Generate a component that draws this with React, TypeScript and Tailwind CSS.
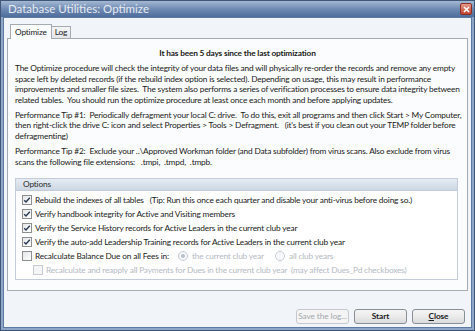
import React from 'react';

const font = { fontFamily: 'Lato, "Liberation Sans", sans-serif' };

function Check({ checked, disabled }: { checked?: boolean; disabled?: boolean }) {
  return (
    <span
      className={`inline-flex items-center justify-center w-[10px] h-[10px] border shrink-0 ${
        disabled ? 'border-[#c8ccd2] bg-[#f4f5f7]' : 'border-[#8e8f8f] bg-gradient-to-br from-[#e4e6e8] to-white'
      }`}
    >
      {checked && (
        <svg width="8" height="8" viewBox="0 0 8 8">
          <path d="M1.2 4.2 L3 6 L6.8 1.8" fill="none" stroke="#2a3a55" strokeWidth="1.4" />
        </svg>
      )}
    </span>
  );
}

function Radio({ checked }: { checked?: boolean }) {
  return (
    <span className="inline-flex items-center justify-center w-[10px] h-[10px] rounded-full border border-[#c8ccd2] bg-[#f6f7f9] shrink-0">
      {checked && <span className="w-[4px] h-[4px] rounded-full bg-[#b9c0ca]" />}
    </span>
  );
}

function Btn({ children, disabled }: { children: React.ReactNode; disabled?: boolean }) {
  return (
    <button
      className={`w-[53px] h-[15px] rounded-[3px] border text-[8.3px] tracking-[-0.1px] leading-none whitespace-nowrap flex items-center justify-center ${
        disabled
          ? 'border-[#c5c9cf] bg-[#f4f4f4] text-[#a3a8ae]'
          : 'border-[#8a8f96] bg-gradient-to-b from-[#f4f4f4] via-[#ebebeb] to-[#d9dadc] text-[#1a1a1a] font-bold'
      }`}
    >
      {children}
    </button>
  );
}

export default function App() {
  const rows = [
    'Rebuild the indexes of all tables   (Tip: Run this once each quarter and disable your anti-virus before doing so.)',
    'Verify handbook integrity for Active and Visiting members',
    'Verify the Service History records for Active Leaders in the current club year',
    'Verify the auto-add Leadership Training records for Active Leaders in the current club year',
  ];

  return (
    <div
      className="w-[475px] h-[331px] flex flex-col bg-[#8fa6c6] border border-[#3f5879] overflow-hidden text-[#1a1a1a]"
      style={font}
    >
      {/* title bar */}
      <div className="h-[16px] flex items-center justify-between bg-gradient-to-b from-[#a4b8d3] via-[#6f8bb3] to-[#4d6d9b] pl-[7px] pr-[2px]">
        <span className="text-[11.5px] text-[#e6ebf2] leading-none">Database Utilities: Optimize</span>
        <span className="w-[12px] h-[12px] rounded-[2px] bg-gradient-to-b from-[#e39a8c] to-[#c3422f] border border-[#8e2f23] flex items-center justify-center">
          <svg width="7" height="7" viewBox="0 0 7 7">
            <path d="M1 1 L6 6 M6 1 L1 6" stroke="white" strokeWidth="1.6" />
          </svg>
        </span>
      </div>

      {/* client */}
      <div className="flex-1 mx-[2px] mb-[2px] border border-[#5d7aa3] bg-[#f1f4f8] flex flex-col px-[3px] pt-[5px] text-[8.3px] tracking-[-0.17px]">
        {/* tabs */}
        <div className="flex items-end h-[15px] pl-[3px]">
          <div className="h-[15px] px-[4px] bg-[#fbfcfd] border border-b-0 border-[#a6abb3] flex items-center relative top-[1px] z-10">
            Optimize
          </div>
          <div className="h-[12px] px-[3px] bg-gradient-to-b from-[#f4f4f4] to-[#e4e6ea] border border-l-0 border-b-0 border-[#a6abb3] flex items-center">
            Log
          </div>
        </div>

        {/* panel */}
        <div className="h-[253px] bg-[#fbfcfd] border border-[#a6abb3] px-[7px] pt-[9px] leading-[10.4px] whitespace-nowrap">
          <div className="text-center font-bold mb-[5px]">It has been 5 days since the last optimization</div>
          <div>The Optimize procedure will check the integrity of your data files and will physically re-order the records and remove any empty</div>
          <div>space left by deleted records (if the rebuild index option is selected). Depending on usage, this may result in performance</div>
          <div>improvements and smaller file sizes.&nbsp; The system also performs a series of verification processes to ensure data integrity between</div>
          <div>related tables.&nbsp; You should run the optimize procedure at least once each month and before applying updates.</div>

          <div className="mt-[5px]">Performance Tip #1:&nbsp; Periodically defragment your local C: drive.&nbsp; To do this, exit all programs and then click Start &gt; My Computer,</div>
          <div>then right-click the drive C: icon and select Properties &gt; Tools &gt; Defragment.&nbsp;&nbsp; (it's best if you clean out your TEMP folder before</div>
          <div>defragmenting)</div>

          <div className="mt-[5px]">Performance Tip #2:&nbsp; Exclude your ..\Approved Workman folder (and Data subfolder) from virus scans. Also exclude from virus</div>
          <div>scans the following file extensions:&nbsp;&nbsp; .tmpi,&nbsp; .tmpd,&nbsp; .tmpb.</div>

          {/* options group */}
          <div className="mt-[11px] w-[443px] h-[102px] border border-[#c3ccd8] bg-white">
            <div className="h-[12px] bg-gradient-to-b from-[#e6ecf3] to-[#ccd7e4] border-b border-[#c3ccd8] pl-[7px] flex items-center text-[#2b2b2b]">
              Options
            </div>
            <div className="pl-[6px] pt-[4px] flex flex-col gap-[4px]">
              {rows.map((r) => (
                <div key={r} className="flex items-center gap-[3px] h-[10px]">
                  <Check checked />
                  <span className="whitespace-pre">{r}</span>
                </div>
              ))}
              <div className="flex items-center h-[10px]">
                <Check />
                <span className="ml-[3px] w-[143px]">Recalculate Balance Due on all Fees in:</span>
                <Radio checked />
                <span className="ml-[4px] text-[#b4bac3] w-[83px]">the current club year</span>
                <Radio />
                <span className="ml-[4px] text-[#b4bac3]">all club years</span>
              </div>
              <div className="flex items-center gap-[3px] h-[10px] pl-[11px] text-[#b4bac3]">
                <Check disabled />
                <span>Recalculate and reapply all Payments for Dues in the current club year&nbsp; (may affect Dues_Pd checkboxes)</span>
              </div>
            </div>
          </div>
        </div>

        {/* buttons */}
        <div className="flex justify-end gap-[5px] pr-[3px] mt-[18px]">
          <Btn disabled>Save the log...</Btn>
          <Btn>Start</Btn>
          <Btn>
            <span className="underline">C</span>lose
          </Btn>
        </div>
      </div>
    </div>
  );
}
